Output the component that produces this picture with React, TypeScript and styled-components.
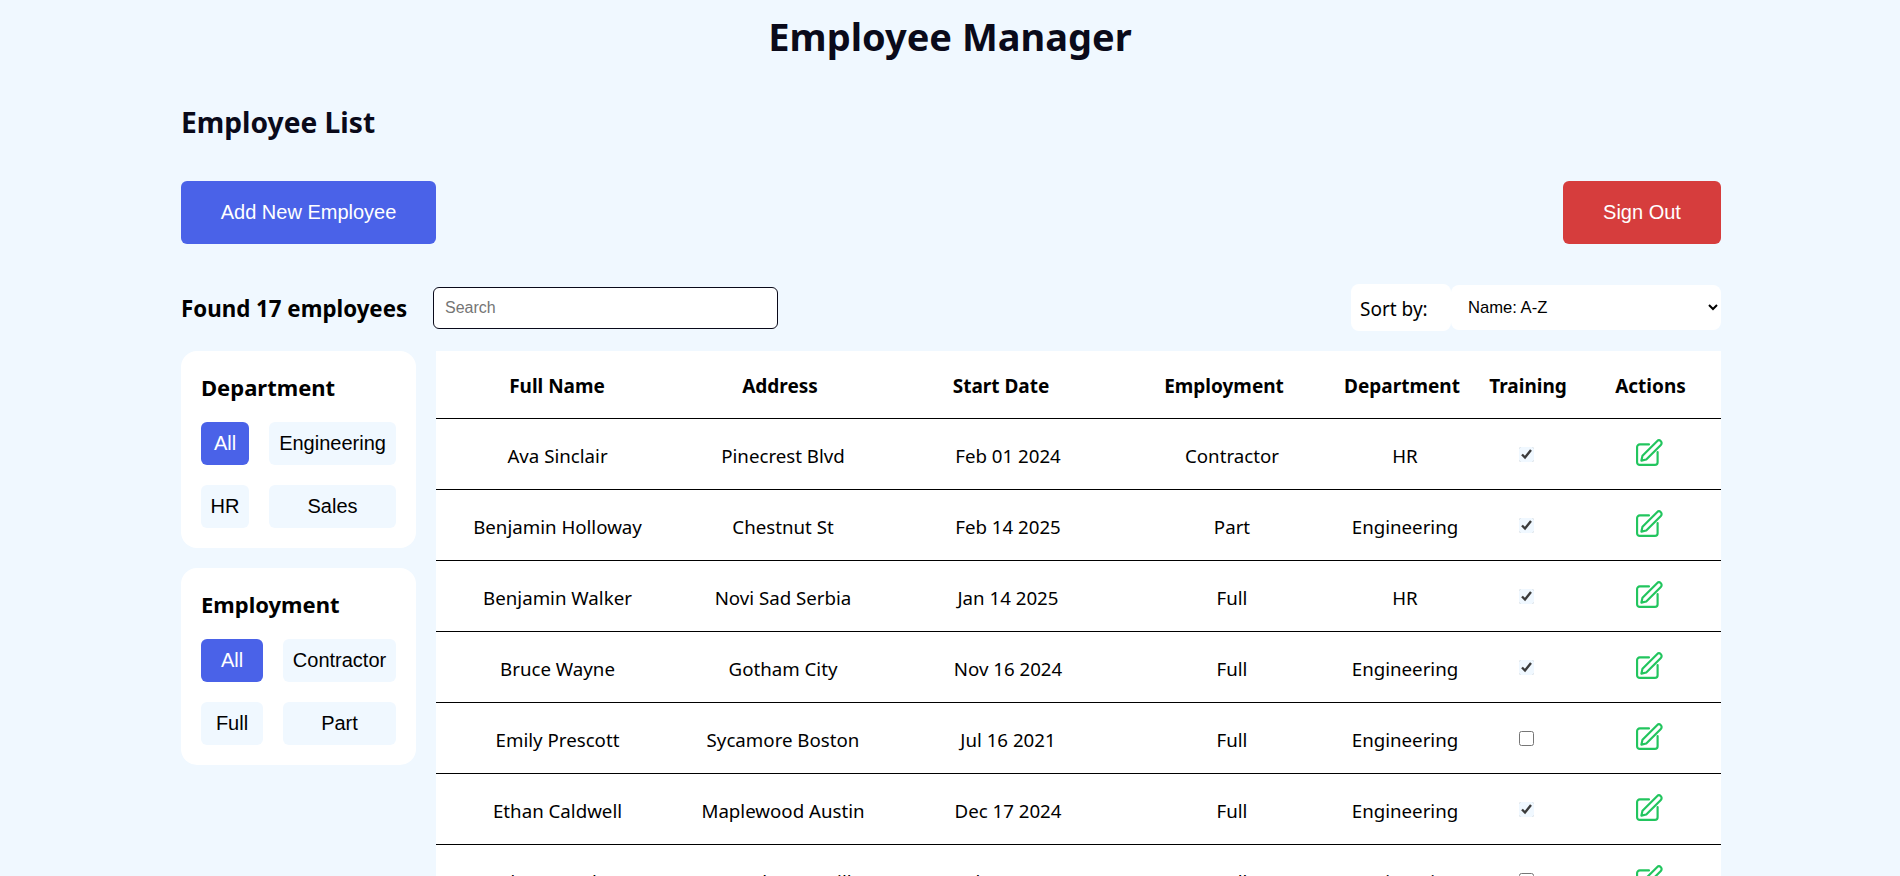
import React from "react";
import styled, { createGlobalStyle } from "styled-components";

const GlobalStyle = createGlobalStyle`
  html, body {
    margin: 0;
    padding: 0;
    height: 100%;
    overflow: hidden;
    background: #f0f8ff;
  }
  body {
    font-family: "Noto Sans", "Open Sans", sans-serif;
    color: #000;
  }
  * { box-sizing: border-box; }
`;

const Title = styled.h1`
  margin: 0;
  height: 75px;
  line-height: 73px;
  text-align: center;
  font-size: 38px;
  font-weight: 700;
  color: #0a0a1a;
`;

const Page = styled.main`
  padding: 0 179px 0 181px;
`;

const ListTitle = styled.h2`
  margin: 0;
  height: 106px;
  padding-top: 27px;
  line-height: 40px;
  font-size: 28.2px;
  font-weight: 700;
  color: #0a0a1a;
`;

const ActionBar = styled.div`
  display: flex;
  justify-content: space-between;
  height: 63px;
`;

const Button = styled.button<{ $tone: "blue" | "red"; $width: number }>`
  width: ${(p) => p.$width}px;
  height: 63px;
  border: none;
  border-radius: 6px;
  color: #fff;
  font-family: "Liberation Sans", Arial, sans-serif;
  font-size: 20px;
  background: ${(p) => (p.$tone === "blue" ? "#4a62e8" : "#d63d3d")};
`;

const FilterBar = styled.div`
  display: flex;
  align-items: center;
  height: 47px;
  margin-top: 40px;
`;

const Found = styled.div`
  width: 252px;
  padding-top: 2px;
  font-size: 22.3px;
  font-weight: 700;
  white-space: nowrap;
`;

const Search = styled.input`
  width: 345px;
  height: 42px;
  margin-top: 1px;
  padding: 0 11px;
  border: 1px solid #0a0a1a;
  border-radius: 6px;
  background: #fff;
  font-family: "Liberation Sans", Arial, sans-serif;
  font-size: 16px;
  outline: none;
  &::placeholder { color: #757575; }
`;

const SortLabel = styled.label`
  display: flex;
  align-items: center;
  width: 100px;
  height: 47px;
  margin-left: auto;
  padding: 2px 0 0 9px;
  border-radius: 8px;
  background: #fff;
  font-size: 19px;
`;

const SortSelect = styled.select`
  width: 270px;
  height: 45px;
  margin-top: -1px;
  padding-left: 13px;
  border: none;
  border-radius: 8px;
  background: #fff;
  color: #000;
  font-family: "Liberation Sans", Arial, sans-serif;
  font-size: 16.6px;
  outline: none;
`;

const Content = styled.div`
  display: flex;
  gap: 20px;
  margin-top: 20px;
  align-items: flex-start;
`;

const Sidebar = styled.aside`
  display: flex;
  flex-direction: column;
  gap: 20px;
  width: 235px;
  flex: none;
`;

const FilterCard = styled.section`
  height: 197px;
  padding: 20px;
  border-radius: 16px;
  background: #fff;
`;

const FilterTitle = styled.h3`
  margin: 0 0 20px;
  height: 31px;
  line-height: 33px;
  font-size: 22px;
  font-weight: 700;
`;

const ChipGrid = styled.div<{ $columns: string }>`
  display: grid;
  grid-template-columns: ${(p) => p.$columns};
  gap: 20px;
`;

const Chip = styled.button<{ $active?: boolean }>`
  height: 43px;
  padding: 0;
  border: none;
  border-radius: 6px;
  font-family: "Liberation Sans", Arial, sans-serif;
  font-size: 20px;
  color: ${(p) => (p.$active ? "#fff" : "#000")};
  background: ${(p) => (p.$active ? "#4a62e8" : "#f0f8ff")};
`;

const TableWrap = styled.div`
  flex: 1;
  background: #fff;
`;

const HeadRow = styled.div`
  display: grid;
  grid-template-columns: 242px 204px 238px 208px 148px 104px 141px;
  align-items: center;
  height: 68px;
  padding-top: 3px;
  border-bottom: 1px solid #000;
  font-size: 19px;
  font-weight: 700;
  text-align: center;
`;

const Row = styled.div`
  display: grid;
  grid-template-columns: 243px 208px 242px 206px 140px 103px 143px;
  align-items: center;
  height: 71px;
  border-bottom: 1px solid #000;
  font-size: 18.7px;
  text-align: center;
`;

const Cell = styled.div`
  padding-top: 3px;
`;

const Check = styled.input`
  display: block;
  width: 15px;
  height: 15px;
  margin: 0 auto;
  accent-color: #f0f8ff;
`;

const EditIcon = styled.svg`
  display: block;
  margin: -3px auto 0;
  width: 27px;
  height: 27px;
  fill: none;
  stroke: #22c55e;
  stroke-width: 2;
  stroke-linecap: round;
  stroke-linejoin: round;
`;

type Employee = {
  name: string;
  address: string;
  start: string;
  employment: string;
  department: string;
  training: boolean;
};

const employees: Employee[] = [
  { name: "Ava Sinclair", address: "Pinecrest Blvd", start: "Feb 01 2024", employment: "Contractor", department: "HR", training: true },
  { name: "Benjamin Holloway", address: "Chestnut St", start: "Feb 14 2025", employment: "Part", department: "Engineering", training: true },
  { name: "Benjamin Walker", address: "Novi Sad Serbia", start: "Jan 14 2025", employment: "Full", department: "HR", training: true },
  { name: "Bruce Wayne", address: "Gotham City", start: "Nov 16 2024", employment: "Full", department: "Engineering", training: true },
  { name: "Emily Prescott", address: "Sycamore Boston", start: "Jul 16 2021", employment: "Full", department: "Engineering", training: false },
  { name: "Ethan Caldwell", address: "Maplewood Austin", start: "Dec 17 2024", employment: "Full", department: "Engineering", training: true },
  { name: "Edgar Brookes", address: "Manchester Hill", start: "Feb 14 2025", employment: "Full", department: "Engineering", training: false },
];

const headers = ["Full Name", "Address", "Start Date", "Employment", "Department", "Training", "Actions"];

export default function App() {
  return (
    <>
      <GlobalStyle />
      <Title>Employee Manager</Title>
      <Page>
        <ListTitle>Employee List</ListTitle>
        <ActionBar>
          <Button $tone="blue" $width={255}>Add New Employee</Button>
          <Button $tone="red" $width={158}>Sign Out</Button>
        </ActionBar>
        <FilterBar>
          <Found>Found 17 employees</Found>
          <Search placeholder="Search" />
          <SortLabel>Sort by:</SortLabel>
          <SortSelect defaultValue="az">
            <option value="az">Name: A-Z</option>
            <option value="za">Name: Z-A</option>
          </SortSelect>
        </FilterBar>
        <Content>
          <Sidebar>
            <FilterCard>
              <FilterTitle>Department</FilterTitle>
              <ChipGrid $columns="48px 127px">
                <Chip $active>All</Chip>
                <Chip>Engineering</Chip>
                <Chip>HR</Chip>
                <Chip>Sales</Chip>
              </ChipGrid>
            </FilterCard>
            <FilterCard>
              <FilterTitle>Employment</FilterTitle>
              <ChipGrid $columns="62px 113px">
                <Chip $active>All</Chip>
                <Chip>Contractor</Chip>
                <Chip>Full</Chip>
                <Chip>Part</Chip>
              </ChipGrid>
            </FilterCard>
          </Sidebar>
          <TableWrap>
            <HeadRow>
              {headers.map((h) => (
                <div key={h}>{h}</div>
              ))}
            </HeadRow>
            {employees.map((e) => (
              <Row key={e.name}>
                <Cell>{e.name}</Cell>
                <Cell>{e.address}</Cell>
                <Cell>{e.start}</Cell>
                <Cell>{e.employment}</Cell>
                <Cell>{e.department}</Cell>
                <div>
                  <Check type="checkbox" defaultChecked={e.training} />
                </div>
                <div>
                  <EditIcon viewBox="0 0 25 25">
                    <path d="M12 5H3.5A2.5 2.5 0 0 0 1 7.5v14A2.5 2.5 0 0 0 3.5 24h14a2.5 2.5 0 0 0 2.5-2.5V12" />
                    <path d="M5 20l1-4.5L19.5 2a2.4 2.4 0 0 1 3.5 3.5L9.5 19z" />
                  </EditIcon>
                </div>
              </Row>
            ))}
          </TableWrap>
        </Content>
      </Page>
    </>
  );
}
